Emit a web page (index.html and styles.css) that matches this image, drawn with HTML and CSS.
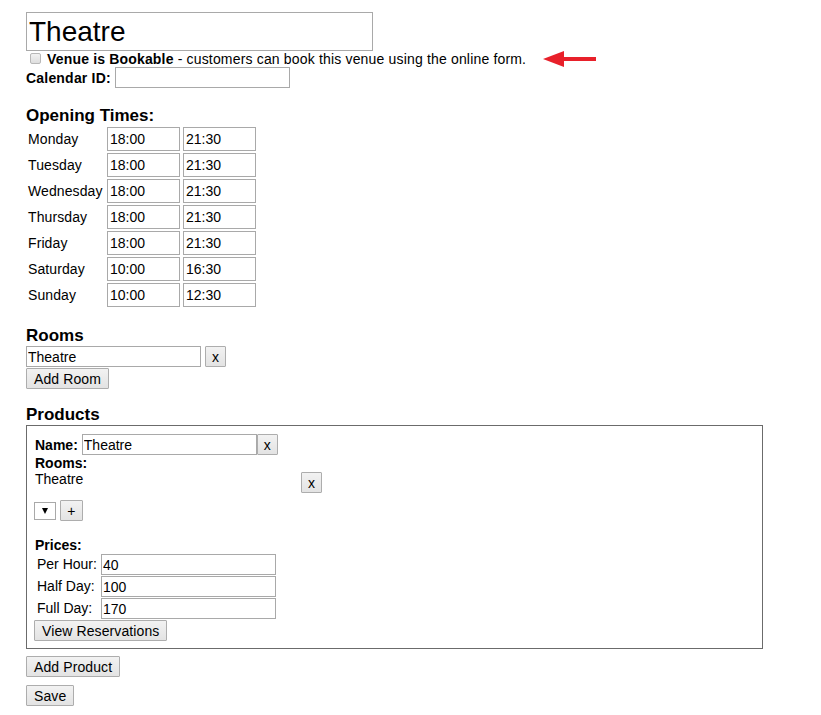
FILE: index.html
```html
<!DOCTYPE html>
<html>
<head>
<meta charset="utf-8">
<link rel="stylesheet" href="styles.css">
</head>
<body>
<div class="page">
  <input class="title-input" type="text" value="Theatre">
  <div class="bookable">
    <span class="checkbox"></span>
    <span class="bookable-text"><b>Venue is Bookable</b> - customers can book this venue using the online form.</span>
    <svg class="arrow" width="54" height="16" viewBox="0 0 54 16"><path d="M0 8 L21 0 L21 6 L53 6 L53 10 L21 10 L21 16 Z" fill="#e8202a"/></svg>
  </div>
  <div class="calendar">
    <b>Calendar ID:</b>
    <input class="field cal-input" type="text" value="">
  </div>

  <h3 class="heading opening-heading">Opening Times:</h3>
  <div class="times">
    <span class="day">Monday</span><input class="field time" value="18:00"><input class="field time" value="21:30">
    <span class="day">Tuesday</span><input class="field time" value="18:00"><input class="field time" value="21:30">
    <span class="day">Wednesday</span><input class="field time" value="18:00"><input class="field time" value="21:30">
    <span class="day">Thursday</span><input class="field time" value="18:00"><input class="field time" value="21:30">
    <span class="day">Friday</span><input class="field time" value="18:00"><input class="field time" value="21:30">
    <span class="day">Saturday</span><input class="field time" value="10:00"><input class="field time" value="16:30">
    <span class="day">Sunday</span><input class="field time" value="10:00"><input class="field time" value="12:30">
  </div>

  <h3 class="heading rooms-heading">Rooms</h3>
  <div class="room-row">
    <input class="field room-input" value="Theatre">
    <button class="btn">x</button>
  </div>
  <div class="btn-row"><button class="btn">Add Room</button></div>

  <h3 class="heading products-heading">Products</h3>
  <div class="product">
    <div class="name-row">
      <b>Name:</b>
      <input class="field name-input" value="Theatre">
      <button class="btn">x</button>
    </div>
    <div class="label-bold">Rooms:</div>
    <div class="prod-room">
      <span class="prod-room-name">Theatre</span>
      <button class="btn">x</button>
    </div>
    <div class="add-room-row">
      <span class="select"><span class="tri"></span></span>
      <button class="btn plus">+</button>
    </div>
    <div class="label-bold prices-label">Prices:</div>
    <div class="prices">
      <span class="price-label">Per Hour:</span><input class="field price" value="40">
      <span class="price-label">Half Day:</span><input class="field price" value="100">
      <span class="price-label">Full Day:</span><input class="field price" value="170">
    </div>
    <button class="btn view-btn">View Reservations</button>
  </div>

  <div class="btn-row add-product"><button class="btn">Add Product</button></div>
  <div class="btn-row save"><button class="btn">Save</button></div>
</div>
</body>
</html>
```
FILE: styles.css
```css
html, body {
  margin: 0;
  padding: 0;
  background: #fff;
}
body {
  font-family: "Liberation Sans", Arial, sans-serif;
  font-size: 14px;
  color: #000;
}
.page {
  padding: 12px 0 0 26px;
}
input {
  font-family: "Liberation Sans", Arial, sans-serif;
  color: #000;
  box-sizing: border-box;
  margin: 0;
  outline: none;
}
.title-input {
  display: block;
  width: 347px;
  height: 39px;
  font-size: 28px;
  padding: 0 2px;
  border: 1px solid #a9a9a9;
}
.bookable {
  display: flex;
  align-items: center;
  height: 16px;
  margin-top: 0;
  line-height: 16px;
}
.bookable-text {
  letter-spacing: 0.17px;
}
.checkbox {
  width: 9px;
  height: 9px;
  margin: 0 6px 2px 4px;
  border: 1px solid #b8b8b8;
  border-radius: 2px;
  background: linear-gradient(#f2f2f2, #dedede);
}
.arrow {
  margin-left: 17px;
}
.calendar {
  display: flex;
  align-items: center;
  height: 21px;
  margin-top: 0;
}
.calendar b {
  margin-right: 4px;
  letter-spacing: 0.2px;
}
.field {
  border: 1px solid #a9a9a9;
  font-size: 14px;
  padding: 0 1px;
  height: 21px;
  background: #fff;
}
.cal-input {
  width: 175px;
}
.heading {
  margin: 0;
  font-size: 17px;
  font-weight: bold;
  line-height: 20px;
}
.opening-heading {
  margin-top: 18px;
}
.times {
  display: grid;
  grid-template-columns: 78px 73px 73px;
  column-gap: 3px;
  row-gap: 2px;
  margin-top: 1px;
  width: max-content;
}
.day {
  padding-left: 2px;
  line-height: 24px;
  letter-spacing: 0.1px;
}
.time {
  height: 24px;
  padding: 0 2px;
}
.rooms-heading {
  margin-top: 19px;
}
.room-row {
  display: flex;
  align-items: center;
  gap: 4px;
  margin-top: 0;
}
.room-input {
  width: 175px;
}
.btn {
  font-family: "Liberation Sans", Arial, sans-serif;
  font-size: 14px;
  letter-spacing: 0.1px;
  color: #000;
  height: 21px;
  padding: 0 7px;
  margin: 0;
  border: 1px solid #adadad;
  border-radius: 1px;
  background: linear-gradient(#f2f2f2, #e3e3e3);
  line-height: 18px;
}
.btn-row {
  display: flex;
  margin-top: 1px;
}
.products-heading {
  margin-top: 16px;
}
.product {
  margin-top: 0;
  width: 737px;
  box-sizing: border-box;
  height: 224px;
  border: 1px solid #6b6b6b;
  padding: 8px 8px 0 8px;
}
.name-row {
  display: flex;
  align-items: center;
  height: 21px;
}
.name-row b {
  margin-right: 4px;
}
.name-input {
  width: 175px;
}
.label-bold {
  font-weight: bold;
  line-height: 16px;
}
.prod-room {
  display: flex;
  align-items: flex-start;
}
.prod-room-name {
  width: 266px;
  line-height: 16px;
}
.prod-room .btn {
  margin-top: 1px;
  padding: 0 6px;
}
.name-row .btn, .room-row .btn {
  padding: 0 6px;
}
.add-room-row {
  display: flex;
  align-items: center;
  gap: 4px;
  margin-top: 7px;
  margin-left: -1px;
}
.select {
  box-sizing: border-box;
  width: 22px;
  height: 18px;
  border: 1px solid #a9a9a9;
  background: #fff;
  display: flex;
  align-items: center;
  justify-content: center;
}
.tri {
  width: 0;
  height: 0;
  border-left: 3px solid transparent;
  border-right: 3px solid transparent;
  border-top: 6px solid #000;
}
.plus {
  width: 23px;
  padding: 0;
}
.prices-label {
  margin-top: 16px;
}
.prices {
  display: grid;
  grid-template-columns: 66px 175px;
  row-gap: 1px;
  margin-top: 1px;
  width: max-content;
}
.price-label {
  padding-left: 2px;
  line-height: 21px;
}
.price {
  width: 175px;
}
.view-btn {
  margin-top: 1px;
  margin-left: -1px;
}
.add-product {
  margin-top: 7px;
}
.save {
  margin-top: 8px;
}
```
